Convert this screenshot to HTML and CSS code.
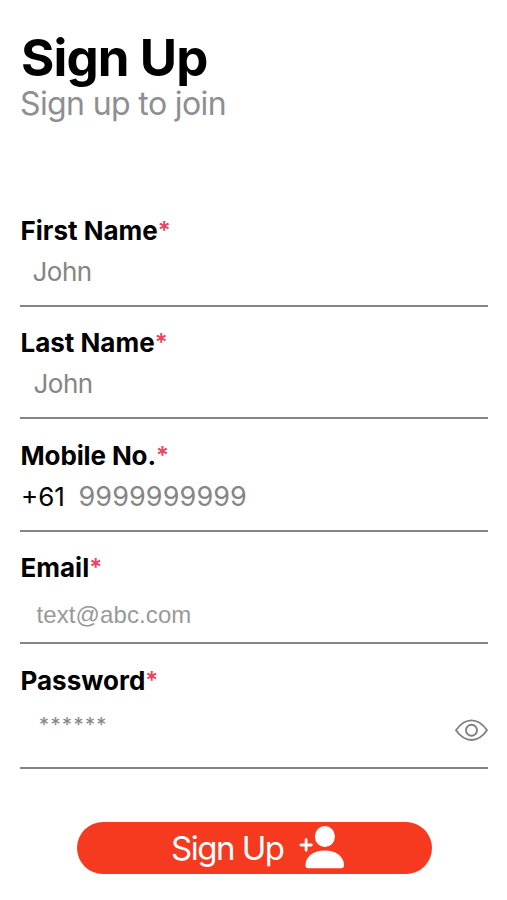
FILE: index.html
```html
<!DOCTYPE html>
<html lang="en">
<head>
<meta charset="utf-8">
<title>Sign Up</title>
<link rel="stylesheet" href="styles.css">
</head>
<body>
<main class="page">
  <header class="header">
    <h1 class="title">Sign Up</h1>
    <p class="subtitle">Sign up to join</p>
  </header>
  <form class="form">
    <div class="field">
      <div class="label">First Name<span class="req">*</span></div>
      <div class="value first"><span class="hint name">John</span></div>
    </div>
    <div class="field">
      <div class="label">Last Name<span class="req">*</span></div>
      <div class="value last"><span class="hint name">John</span></div>
    </div>
    <div class="field">
      <div class="label label-mobile">Mobile No.<span class="req">*</span></div>
      <div class="value mobile"><span class="code">+61</span><span class="hint digits">9999999999</span></div>
    </div>
    <div class="field">
      <div class="label">Email<span class="req">*</span></div>
      <div class="value email"><span class="hint">text@abc.com</span></div>
    </div>
    <div class="field field-password">
      <div class="label">Password<span class="req">*</span></div>
      <div class="value password">
        <span class="hint stars">******</span>
        <svg class="eye" width="34" height="24" viewBox="0 0 34 24" fill="none" stroke="#808080" stroke-width="1.9">
          <path d="M2 12.200C7 5.200 11.500 2.400 17.500 2.400S28 5.200 33 12.200C28 19.200 23.500 22 17.500 22S7 19.200 2 12.200Z" stroke-linejoin="round"/>
          <circle cx="17.500" cy="12.200" r="5.500"/>
        </svg>
      </div>
    </div>
  </form>
  <button class="submit" type="button">
    <span class="submit-text">Sign Up</span>
    <svg class="user" width="46" height="44" viewBox="0 0 46 44" fill="#fff">
      <ellipse cx="25.900" cy="10.500" rx="10" ry="10.500"/>
      <path d="M6.500 39.300C6.500 30.300 14.700 24.500 25.800 24.500S45 30.300 45 39.300Q45 42.300 42.300 42.300H9.200Q6.500 42.300 6.500 39.300Z"/>
      <path d="M1.900 19H12.300M7.100 13.700V24.300" stroke="#fff" stroke-width="2.800" stroke-linecap="round"/>
    </svg>
  </button>
</main>
</body>
</html>
```
FILE: styles.css
```css
* { box-sizing: border-box; }
body {
  margin: 0;
  background: #fff;
  font-family: Inter, "Liberation Sans", sans-serif;
  color: #000;
}
.page {
  width: 507px;
  height: 900px;
  padding: 27px 19px 0 20px;
  display: flex;
  flex-direction: column;
  overflow: hidden;
}
.header { height: 186px; }
.title {
  margin: 0;
  padding-left: 1px;
  font-size: 51px;
  line-height: 61px;
  font-weight: 700;
  letter-spacing: -0.900px;
}
.subtitle {
  margin: 0;
  font-size: 32px;
  line-height: 31px;
  color: #8e8e93;
  letter-spacing: -0.620px;
}
.form {
  display: flex;
  flex-direction: column;
  gap: 18.400px;
}
.field {
  height: 94px;
  border-bottom: 2px solid #858585;
}
.field-password { height: 106px; }
.label {
  height: 36px;
  padding-left: 0.500px;
  font-size: 26px;
  line-height: 36px;
  font-weight: 700;
  letter-spacing: 0;
  white-space: nowrap;
}
.label-mobile { letter-spacing: -0.130px; }
.req {
  position: relative;
  top: -1px;
  font-size: 24px;
  line-height: 1;
  color: #ee4460;
  font-weight: 600;
}
.value {
  height: 44px;
  display: flex;
  align-items: center;
  font-size: 26px;
  line-height: 44px;
}
.hint { color: #858585; }
.name {
  letter-spacing: -0.500px;
  padding-top: 2px;
}
.first { padding-left: 12.500px; }
.last { padding-left: 13.500px; }
.mobile { padding-top: 1px; }
.code { width: 58.500px; padding: 2px 0 0 1px; }
.digits {
  padding-top: 1px;
  font-size: 27px;
  letter-spacing: 0.100px;
}
.email {
  height: 56px;
  padding: 2px 0 0 16.500px;
  font-family: "Liberation Sans", sans-serif;
  font-size: 24px;
  letter-spacing: 0.100px;
}
.email .hint { color: #999; }
.password {
  height: 62px;
  justify-content: space-between;
  padding-left: 19px;
}
.stars {
  padding-bottom: 10px;
  font-size: 20px;
  letter-spacing: 1.450px;
}
.submit {
  width: 355px;
  height: 52px;
  margin: 53px 0 0 56.500px;
  padding: 0 0 0 94.500px;
  display: flex;
  align-items: center;
  border: 0;
  border-radius: 26px;
  background: #f63a20;
  color: #fff;
  font-family: inherit;
}
.submit-text {
  width: 128px;
  text-align: left;
  font-size: 33px;
  letter-spacing: -1.500px;
  white-space: nowrap;
}
.user { flex: none; }
```
